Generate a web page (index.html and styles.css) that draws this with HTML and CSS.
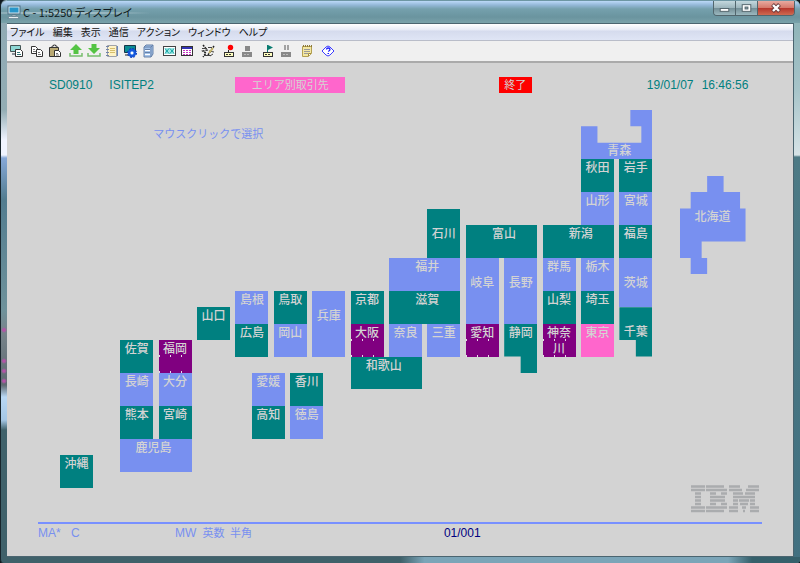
FILE: index.html
```html
<!DOCTYPE html>
<html lang="ja">
<head>
<meta charset="utf-8">
<title>C - 1:5250 ディスプレイ</title>
<link rel="stylesheet" href="styles.css">
</head>
<body>
<div class="window">
  <header class="titlebar">
    <svg class="app-icon" viewBox="0 0 14 14" aria-hidden="true">
      <rect x="1" y="1" width="12" height="8" fill="#d5e6ef" stroke="#4b6f83"/>
      <rect x="2.500" y="2.500" width="9" height="5" fill="#2795c9"/>
      <path d="M5 10h4v1H5zM2 11.500h9l1 2H1z" fill="#e8eef2" stroke="#587485" stroke-width=".6"/>
    </svg>
    <h1 class="title">C - 1:5250 ディスプレイ</h1>
    <div class="controls">
      <button class="control" aria-label="最小化"><svg viewBox="0 0 22 14"><rect x="6.500" y="7.500" width="9" height="3" fill="#fff" stroke="#52646b"/></svg></button>
      <button class="control" aria-label="最大化"><svg viewBox="0 0 22 14"><rect x="6.500" y="3.500" width="9" height="7" fill="#fff" stroke="#52646b"/><rect x="9.500" y="6" width="3" height="2" fill="#91a9b0" stroke="#52646b"/></svg></button>
      <button class="control close" aria-label="閉じる"><svg viewBox="0 0 36 14"><path d="M14.500 3.500 21.500 10.500M21.500 3.500 14.500 10.500" stroke="#66393a" stroke-width="4"/><path d="M15 4 21 10M21 4 15 10" stroke="#fff" stroke-width="2.400"/></svg></button>
    </div>
  </header>

  <main class="client">
    <nav class="menubar">
      <button>ファイル</button><button>編集</button><button>表示</button><button>通信</button><button>アクション</button><button>ウィンドウ</button><button>ヘルプ</button>
    </nav>

    <div class="toolbar">
      <div class="group">
        <button aria-label="画面の複写"><svg viewBox="0 0 14 14"><path d="M1.500 1.500h10v6h-10z" fill="#8ed7d4" stroke="#455"/><path d="M3 10h4" stroke="#234"/><path d="M6.500 5.500h5l2 2v5h-7z" fill="#fff" stroke="#333"/><path d="M8 8.500h3M8 10.500h4" stroke="#377"/></svg></button>
      </div>
      <div class="group">
        <button aria-label="コピー"><svg viewBox="0 0 14 14"><path d="M1.500 2.500h4l2 2v5h-6z" fill="#fff" stroke="#333"/><path d="M3 5.500h2M3 7.500h3" stroke="#777"/><path d="M6.500 5.500h4l2 2v5h-6z" fill="#fff" stroke="#333"/><path d="M8 8.500h2M8 10.500h3" stroke="#777"/></svg></button>
        <button aria-label="貼り付け"><svg viewBox="0 0 14 14"><path d="M1.500 3.500h9v9h-9z" fill="#b9a973" stroke="#333"/><path d="M4 3.500V2h1.500V1h2v1H9v1.500z" fill="#eee" stroke="#222" stroke-width=".8"/><path d="M6.500 6.500h4l2 2v4h-6z" fill="#fff" stroke="#333"/><path d="M8 9.500h2M8 11h3" stroke="#777"/></svg></button>
      </div>
      <div class="group">
        <button aria-label="送信"><svg viewBox="0 0 14 14"><path d="M7 0 13 6H9.500v4h-5V6H1z" fill="#55c444"/><path d="M1 9v3h12V9" fill="none" stroke="#76bd6c" stroke-width="1.500"/></svg></button>
        <button aria-label="受信"><svg viewBox="0 0 14 14"><path d="M4.500 0h5v4H13l-6 6-6-6h3.500z" fill="#55c444"/><path d="M1 9v3h12V9" fill="none" stroke="#76bd6c" stroke-width="1.500"/></svg></button>
        <button aria-label="リスト"><svg viewBox="0 0 14 14"><path d="M2.500 1.500h9v11h-9z" fill="#fff3c4" stroke="#a0a3a8"/><path d="M1 2.500h3M1 5.500h3M1 8.500h3M1 11.500h3" stroke="#7183a8"/><path d="M5 4.500h5M5 6.500h5M5 8.500h5" stroke="#d6bf6d"/><path d="M12.500 2v10" stroke="#6b88bb"/></svg></button>
        <button aria-label="表示設定"><svg viewBox="0 0 14 14"><path d="M1.500 1.500h11v7h-11z" fill="#0b8c92" stroke="#163547"/><path d="M2 11h5" stroke="#222"/><circle cx="9" cy="9" r="3" fill="#93c6ff" stroke="#1557dc" stroke-width="2.400"/><circle cx="9" cy="9" r="4.500" fill="none" stroke="#0539b8" stroke-dasharray="2 1.500"/><circle cx="9" cy="9" r="1.200" fill="#fff"/></svg></button>
        <button aria-label="印刷設定"><svg viewBox="0 0 14 14"><path d="m3 3 2-2h7v9l-2 3H3z" fill="#a4c3ea" stroke="#6681a8"/><path d="M3 3h7v10M10 3l2-2M4 5.500h5M4 8.500h5" fill="none" stroke="#6681a8"/><path d="M4 6.500h5M4 10.500h5" stroke="#fff"/></svg></button>
      </div>
      <div class="group">
        <button aria-label="カラー"><svg viewBox="0 0 14 14"><rect x="1.500" y="2.500" width="12" height="9" fill="#fff" stroke="#444"/><rect x="3" y="4" width="9" height="6" fill="#9fe8e4"/><path d="m3 4.500 4 5m0-5-4 5m5-5 4 5m0-5-4 5" stroke="#19a5a5"/></svg></button>
        <button aria-label="キーボード"><svg viewBox="0 0 14 14"><rect x="1.500" y="2.500" width="11" height="9" fill="#fff" stroke="#333"/><path d="M2 4h10" stroke="#3333b4" stroke-width="2"/><path d="M3 6.500h9M3 8.500h9M3 10.500h9" stroke="#c033c0" stroke-dasharray="2 1"/></svg></button>
      </div>
      <div class="group">
        <button aria-label="マクロ編集"><svg viewBox="0 0 14 14"><path d="m2 1 4 5-4 1 3 2-3 4m5-2 6-9" fill="none" stroke="#222" stroke-width="1.500" stroke-dasharray="2 1"/><path d="M1 4.500h5M7 3.500h4M3 11.500h7M8 7l5 1M9 12l3-2" stroke="#444"/><path d="m8 9 4-5" stroke="#c9b96a" stroke-width="2"/></svg></button>
      </div>
      <div class="group">
        <button aria-label="記録"><svg viewBox="0 0 14 14"><circle cx="8.500" cy="3.500" r="2.700" fill="#f00"/><path d="M6.500 6v2" stroke="#222"/><rect x="2.500" y="8.500" width="9" height="4" fill="#ffffc0" stroke="#333"/><path d="M4 10.500h6" stroke="#333" stroke-dasharray="2 1"/></svg></button>
        <button aria-label="記録停止"><svg viewBox="0 0 14 14"><path d="M5 2h5v5H5zM2 8h10v5H2z" fill="#888"/><path d="M4 10.500h6" stroke="#bbb" stroke-dasharray="2 1"/></svg></button>
      </div>
      <div class="group">
        <button aria-label="再生"><svg viewBox="0 0 14 14"><path d="M6.500 1v7" stroke="#087b70"/><path d="m7 1 5 2.500L7 6z" fill="#087b70"/><rect x="2.500" y="8.500" width="9" height="4" fill="#ffffc0" stroke="#333"/><path d="M4 10.500h6" stroke="#333" stroke-dasharray="2 1"/></svg></button>
        <button aria-label="一時停止"><svg viewBox="0 0 14 14"><path d="M6 1v5M9 1v5" stroke="#888" stroke-width="1.500"/><path d="M2 8h10v5H2z" fill="#888"/><path d="M4 10.500h6" stroke="#bbb" stroke-dasharray="2 1"/></svg></button>
      </div>
      <div class="group">
        <button aria-label="メモ"><svg viewBox="0 0 14 14"><path d="M2.500 2.500h9v7l-3 3h-6z" fill="#f3e7a2" stroke="#b3a052"/><path d="M3 2h9" stroke="#8c7938" stroke-width="2" stroke-dasharray="1 1"/><path d="M4 5.500h6M4 7.500h6M4 9.500h4" stroke="#999"/><path d="M8.500 12V9.500H11" fill="#fff" stroke="#a08b3c"/></svg></button>
      </div>
      <div class="group">
        <button aria-label="ヘルプ"><svg viewBox="0 0 14 14"><path d="m1 7 4-4 2-1 2 1 4 4-4 4-2 1-2-1z" fill="#fff" stroke="#3c3cff"/><path d="M5.500 5.500Q5.500 4 7.200 4T9 5.500q0 1-1.800 2" fill="none" stroke="#1c1cff" stroke-width="1.300"/><path d="M6.500 9H8v1H6.500z" fill="#1c1cff"/></svg></button>
      </div>
    </div>

    <section class="screen">
      <span class="field program">SD0910</span>
      <span class="field system">ISITEP2</span>
      <h2 class="field heading">エリア別取引先</h2>
      <button class="field exit">終了</button>
      <span class="field date">19/01/07</span>
      <span class="field time">16:46:56</span>
      <p class="field message">マウスクリックで選択</p>

      <button class="area blue hokkaido">北海道</button>
      <button class="area blue aomori lean-right">青森</button>
      <button class="area teal akita">秋田</button>
      <button class="area teal iwate">岩手</button>
      <button class="area blue yamagata">山形</button>
      <button class="area blue miyagi">宮城</button>
      <button class="area teal ishikawa second-line">石川</button>
      <button class="area teal toyama lean-right">富山</button>
      <button class="area teal niigata lean-right">新潟</button>
      <button class="area teal fukushima">福島</button>
      <button class="area blue fukui lean-right">福井</button>
      <button class="area blue gifu second-line">岐阜</button>
      <button class="area blue nagano second-line">長野</button>
      <button class="area blue gunma">群馬</button>
      <button class="area blue tochigi">栃木</button>
      <button class="area blue ibaraki second-line">茨城</button>
      <button class="area blue shimane">島根</button>
      <button class="area teal tottori">鳥取</button>
      <button class="area blue hyogo second-line">兵庫</button>
      <button class="area teal kyoto">京都</button>
      <button class="area teal shiga lean-right">滋賀</button>
      <button class="area teal yamanashi">山梨</button>
      <button class="area teal saitama">埼玉</button>
      <button class="area teal yamaguchi">山口</button>
      <button class="area teal hiroshima">広島</button>
      <button class="area blue okayama">岡山</button>
      <button class="area purple osaka">大阪</button>
      <button class="area blue nara">奈良</button>
      <button class="area blue mie">三重</button>
      <button class="area purple aichi">愛知</button>
      <button class="area teal shizuoka notched">静岡</button>
      <button class="area purple kanagawa">神奈<br>川</button>
      <button class="area pink tokyo">東京</button>
      <button class="area teal chiba notched second-line">千葉</button>
      <button class="area teal wakayama lean-left">和歌山</button>
      <button class="area teal saga">佐賀</button>
      <button class="area purple fukuoka">福岡</button>
      <button class="area blue nagasaki">長崎</button>
      <button class="area blue oita">大分</button>
      <button class="area teal kumamoto">熊本</button>
      <button class="area teal miyazaki">宮崎</button>
      <button class="area blue kagoshima lean-left">鹿児島</button>
      <button class="area blue ehime">愛媛</button>
      <button class="area teal kagawa">香川</button>
      <button class="area teal kochi">高知</button>
      <button class="area blue tokushima">徳島</button>
      <button class="area teal okinawa">沖縄</button>

      <svg class="logo" viewBox="0 0 68 28" role="img" aria-label="IBM">
        <path d="M0 1.500h14M15 1.500h18M38 1.500h11M57 1.500h11
          M0 5h14M15 5h21M38 5h13M55 5h13
          M4 8.500h6M19 8.500h6M30 8.500h6M42 8.500h10M54 8.500h10
          M4 12h6M19 12h15M42 12h22
          M4 15.500h6M19 15.500h15M42 15.500h5M48 15.500h10M59 15.500h5
          M4 19h6M19 19h6M30 19h6M42 19h5M49 19h8M59 19h5
          M0 22.500h14M15 22.500h21M38 22.500h9M51 22.500h4M59 22.500h9
          M0 26h14M15 26h18M38 26h9M52 26h2M59 26h9" stroke="#aaacae" stroke-width="2.300"/>
      </svg>
    </section>

    <footer class="status">
      <span class="mode">MA*</span>
      <span class="session">C</span>
      <span class="wait">MW</span>
      <span class="input-kind">英数</span>
      <span class="input-width">半角</span>
      <span class="cursor">01/001</span>
    </footer>
  </main>
</div>
</body>
</html>
```
FILE: styles.css
```css
* {
  box-sizing: border-box;
}

body {
  margin: 0;
  background: #10181d;
  font-family: "Noto Sans CJK JP", sans-serif;
}

button {
  margin: 0;
  padding: 0;
  border: 0;
  border-radius: 0;
  background: none;
  color: inherit;
  font: inherit;
}

h1, h2, p {
  margin: 0;
  font-weight: 400;
}

/* Window frame */
.window {
  display: flex;
  flex-direction: column;
  min-height: 100vh;
  padding: 1px 6px 6px;
  border-left: 1px solid #17242b;
  border-radius: 6px 6px 4px 4px;
  background:
    linear-gradient(90deg, #3f616a 0, #3f616a 50%, #7ba5b8 53%, #7ba5b8 91%, #35606b 94%) 0 100% / 100% 6px no-repeat,
    radial-gradient(circle at 3px 5px, #b553a8 1px, transparent 3px) 0 325px / 6px 10px no-repeat,
    radial-gradient(circle at 3px 5px, #b553a8 1px, transparent 3px) 0 356px / 6px 10px no-repeat,
    radial-gradient(circle at 3px 5px, #b553a8 1px, transparent 3px) 0 366px / 6px 10px no-repeat,
    radial-gradient(circle at 3px 5px, #b553a8 1px, transparent 3px) 0 376px / 6px 10px no-repeat,
    linear-gradient(#8fa9b5 0, #93adb4 110px, #f0f4ff 140px, #f0f4ff 155px, #86a8d8 158px, #527c8f 200px, #6f929b 310px, #78858c 330px, #5f6a71 385px, #b9d8f4 397px, #a5c7e5 420px, #3f616a 430px, #3f616a) 0 0 / 6px 100% no-repeat,
    linear-gradient(#86aeb3 0, #a7c4c9 90px, #d6e3e6 155px, #4d7a85 157px, #417080 100%) 100% 0 / 6px 100% no-repeat,
    #6d96a3;
}

.titlebar {
  display: flex;
  align-items: center;
  height: 22px;
  margin: 0 -6px;
  padding-left: 6px;
  border-radius: 6px 6px 0 0;
  background:
    radial-gradient(ellipse at 60px 12px, #c5d6dce0 0, #b4cad2a0 50px, transparent 95px),
    linear-gradient(#bcd9f8 0, #94b8d8 4px, #75a0ad 8px, #6a949f 16px, #79a2aa);
}

.app-icon {
  width: 14px;
  height: 14px;
  margin-right: 2px;
}

.title {
  flex: 1;
  color: #101b20;
  font-size: 11px;
  font-feature-settings: "palt";
  line-height: 20px;
}

.controls {
  display: flex;
  align-self: flex-start;
  margin-right: 5px;
  border: 1px solid #52666d;
  border-top: 0;
  border-radius: 0 0 4px 4px;
  overflow: hidden;
}

.control {
  width: 22px;
  height: 14px;
  border-right: 1px solid #52666d;
  background: linear-gradient(#c4d8de, #9bb4bb 50%, #728d95 50%, #9cb8bf);
}

.control.close {
  width: 36px;
  border-right: 0;
  background: linear-gradient(#e8aaa0, #d57769 50%, #b5352b 50%, #ce6a51);
}

.control svg {
  display: block;
  width: 100%;
  height: 14px;
}

.client {
  display: flex;
  flex: 1;
  flex-direction: column;
  border: 1px solid #4b6570;
  border-left-width: 0;
  background: #d3d3d3;
}

/* Menu and toolbar */
.menubar {
  display: flex;
  gap: 8px;
  height: 17px;
  padding-left: 3px;
  border-bottom: 1px solid #b9bdc9;
  background: linear-gradient(#fff, #e6eaf6 6px, #d5dbed 7px, #dfe5f5);
  color: #111;
  font-size: 10px;
  font-feature-settings: "palt";
  line-height: 14px;
}

.toolbar {
  display: flex;
  align-items: center;
  gap: 3px;
  height: 22px;
  border-bottom: 2px solid #aaa;
  background: #f0f0f0;
}

.group {
  display: flex;
}

.group button {
  width: 18px;
  height: 18px;
  padding: 2px;
}

.group svg {
  display: block;
  width: 14px;
  height: 14px;
}

/* 132 x 27 character screen */
.screen {
  display: grid;
  flex: 1;
  grid-template-columns: repeat(132, minmax(0, 1fr));
  grid-template-rows: repeat(27, minmax(16px, 1fr));
  padding: 14px 31px 1px;
  font-size: 12px;
  line-height: 16px;
}

.field {
  color: #008080;
  font-size: 12px;
  font-family: "Liberation Sans", "Noto Sans CJK JP", sans-serif;
  white-space: nowrap;
  grid-row: 1;
}

.program { grid-column: 3 / 12; }
.system { grid-column: 14 / 24; }
.date { grid-column: 112 / 121; }
.time { grid-column: 122 / 132; }

.heading {
  grid-column: 37 / 57;
  background: #ff66cc;
  color: #d3d3d3;
  font-size: 11px;
  text-align: center;
}

.exit {
  grid-column: 85 / 91;
  background: #f00;
  color: #d3d3d3;
  font-size: 11px;
}

.message {
  grid-area: 4 / 22 / 5 / 50;
  color: #7890f0;
  font-size: 11px;
}

.area {
  display: flex;
  align-items: flex-start;
  justify-content: center;
  color: #d3d3d3;
  font-weight: 500;
  white-space: nowrap;
}

.blue { background-color: #7890f0; }
.teal { background-color: #008080; }
.pink { background-color: #ff66cc; }

.purple {
  background:
    linear-gradient(90deg, #e8d8e8 1px, transparent 1px) 0 15px / 11px 2px repeat-x,
    linear-gradient(90deg, #e8d8e8 1px, transparent 1px) 0 100% / 11px 2px repeat-x,
    #800080;
}

.second-line { padding-top: 16px; }
.lean-right { padding-left: 5px; }
.lean-left { padding-right: 5px; }
.notched { clip-path: polygon(0 0, 100% 0, 100% 100%, 50% 100%, 50% 66.67%, 0 66.67%); }

/* Hokkaido and Tohoku */
.hokkaido {
  grid-area: 7 / 118 / 13 / 130;
  padding-top: 32px;
  clip-path: polygon(41.67% 0, 66.67% 0, 66.67% 16.67%, 91.67% 16.67%, 91.67% 33.33%, 100% 33.33%, 100% 66.67%, 33.33% 66.67%, 33.33% 83.33%, 41.67% 83.33%, 41.67% 100%, 16.67% 100%, 16.67% 83.33%, 0 83.33%, 0 33.33%, 16.67% 33.33%, 16.67% 16.67%, 41.67% 16.67%);
}
.aomori {
  grid-area: 3 / 100 / 6 / 113;
  padding-top: 32px;
  clip-path: polygon(0 33.33%, 23.08% 33.33%, 23.08% 66.67%, 84.62% 66.67%, 84.62% 33.33%, 69.23% 33.33%, 69.23% 0, 100% 0, 100% 100%, 0 100%);
}
.akita { grid-area: 6 / 100 / 8 / 106; }
.iwate { grid-area: 6 / 107 / 8 / 113; }
.yamagata { grid-area: 8 / 100 / 10 / 106; }
.miyagi { grid-area: 8 / 107 / 10 / 113; }
.fukushima { grid-area: 10 / 107 / 12 / 113; }

/* Kanto and Chubu */
.ishikawa { grid-area: 9 / 72 / 12 / 78; }
.toyama { grid-area: 10 / 79 / 12 / 92; }
.niigata { grid-area: 10 / 93 / 12 / 106; }
.fukui { grid-area: 12 / 65 / 14 / 78; }
.gifu { grid-area: 12 / 79 / 16 / 85; }
.nagano { grid-area: 12 / 86 / 16 / 92; }
.gunma { grid-area: 12 / 93 / 14 / 99; }
.tochigi { grid-area: 12 / 100 / 14 / 106; }
.ibaraki { grid-area: 12 / 107 / 15 / 113; }
.yamanashi { grid-area: 14 / 93 / 16 / 99; }
.saitama { grid-area: 14 / 100 / 16 / 106; }
.aichi { grid-area: 16 / 79 / 18 / 85; }
.shizuoka { grid-area: 16 / 86 / 19 / 92; }
.kanagawa { grid-area: 16 / 93 / 18 / 99; }
.tokyo { grid-area: 16 / 100 / 18 / 106; }
.chiba { grid-area: 15 / 107 / 18 / 113; }

/* Kansai, Chugoku and Shikoku */
.shiga { grid-area: 14 / 65 / 16 / 78; }
.kyoto { grid-area: 14 / 58 / 16 / 64; }
.osaka { grid-area: 16 / 58 / 18 / 64; }
.nara { grid-area: 16 / 65 / 18 / 71; }
.mie { grid-area: 16 / 72 / 18 / 78; }
.wakayama { grid-area: 18 / 58 / 20 / 71; }
.hyogo { grid-area: 14 / 51 / 18 / 57; }
.tottori { grid-area: 14 / 44 / 16 / 50; }
.okayama { grid-area: 16 / 44 / 18 / 50; }
.shimane { grid-area: 14 / 37 / 16 / 43; }
.hiroshima { grid-area: 16 / 37 / 18 / 43; }
.yamaguchi { grid-area: 15 / 30 / 17 / 36; }
.ehime { grid-area: 19 / 40 / 21 / 46; }
.kagawa { grid-area: 19 / 47 / 21 / 53; }
.kochi { grid-area: 21 / 40 / 23 / 46; }
.tokushima { grid-area: 21 / 47 / 23 / 53; }

/* Kyushu and Okinawa */
.saga { grid-area: 17 / 16 / 19 / 22; }
.fukuoka { grid-area: 17 / 23 / 19 / 29; }
.nagasaki { grid-area: 19 / 16 / 21 / 22; }
.oita { grid-area: 19 / 23 / 21 / 29; }
.kumamoto { grid-area: 21 / 16 / 23 / 22; }
.miyazaki { grid-area: 21 / 23 / 23 / 29; }
.kagoshima { grid-area: 23 / 16 / 25 / 29; }
.okinawa { grid-area: 24 / 5 / 26 / 11; }

.logo {
  grid-area: 25 / 110 / 28 / 133;
  align-self: end;
  justify-self: end;
  width: 68px;
  height: 28px;
  margin: 0 3px 8px 0;
}

.status {
  display: grid;
  grid-template-columns: repeat(132, minmax(0, 1fr));
  align-content: start;
  height: 34px;
  margin: 0 31px;
  padding-top: 1px;
  border-top: 2px solid #7890ff;
  color: #7890f0;
  font-size: 12px;
  font-family: "Liberation Sans", "Noto Sans CJK JP", sans-serif;
  line-height: 17px;
  white-space: nowrap;
}

.status span { grid-row: 1; }
.mode { grid-column: 1 / 5; }
.session { grid-column: 7 / 9; }
.wait { grid-column: 26 / 29; }
.input-kind { grid-column: 31 / 35; font-size: 11px; }
.input-width { grid-column: 36 / 40; font-size: 11px; }
.cursor { grid-column: 75 / 83; color: #000080; }
```
